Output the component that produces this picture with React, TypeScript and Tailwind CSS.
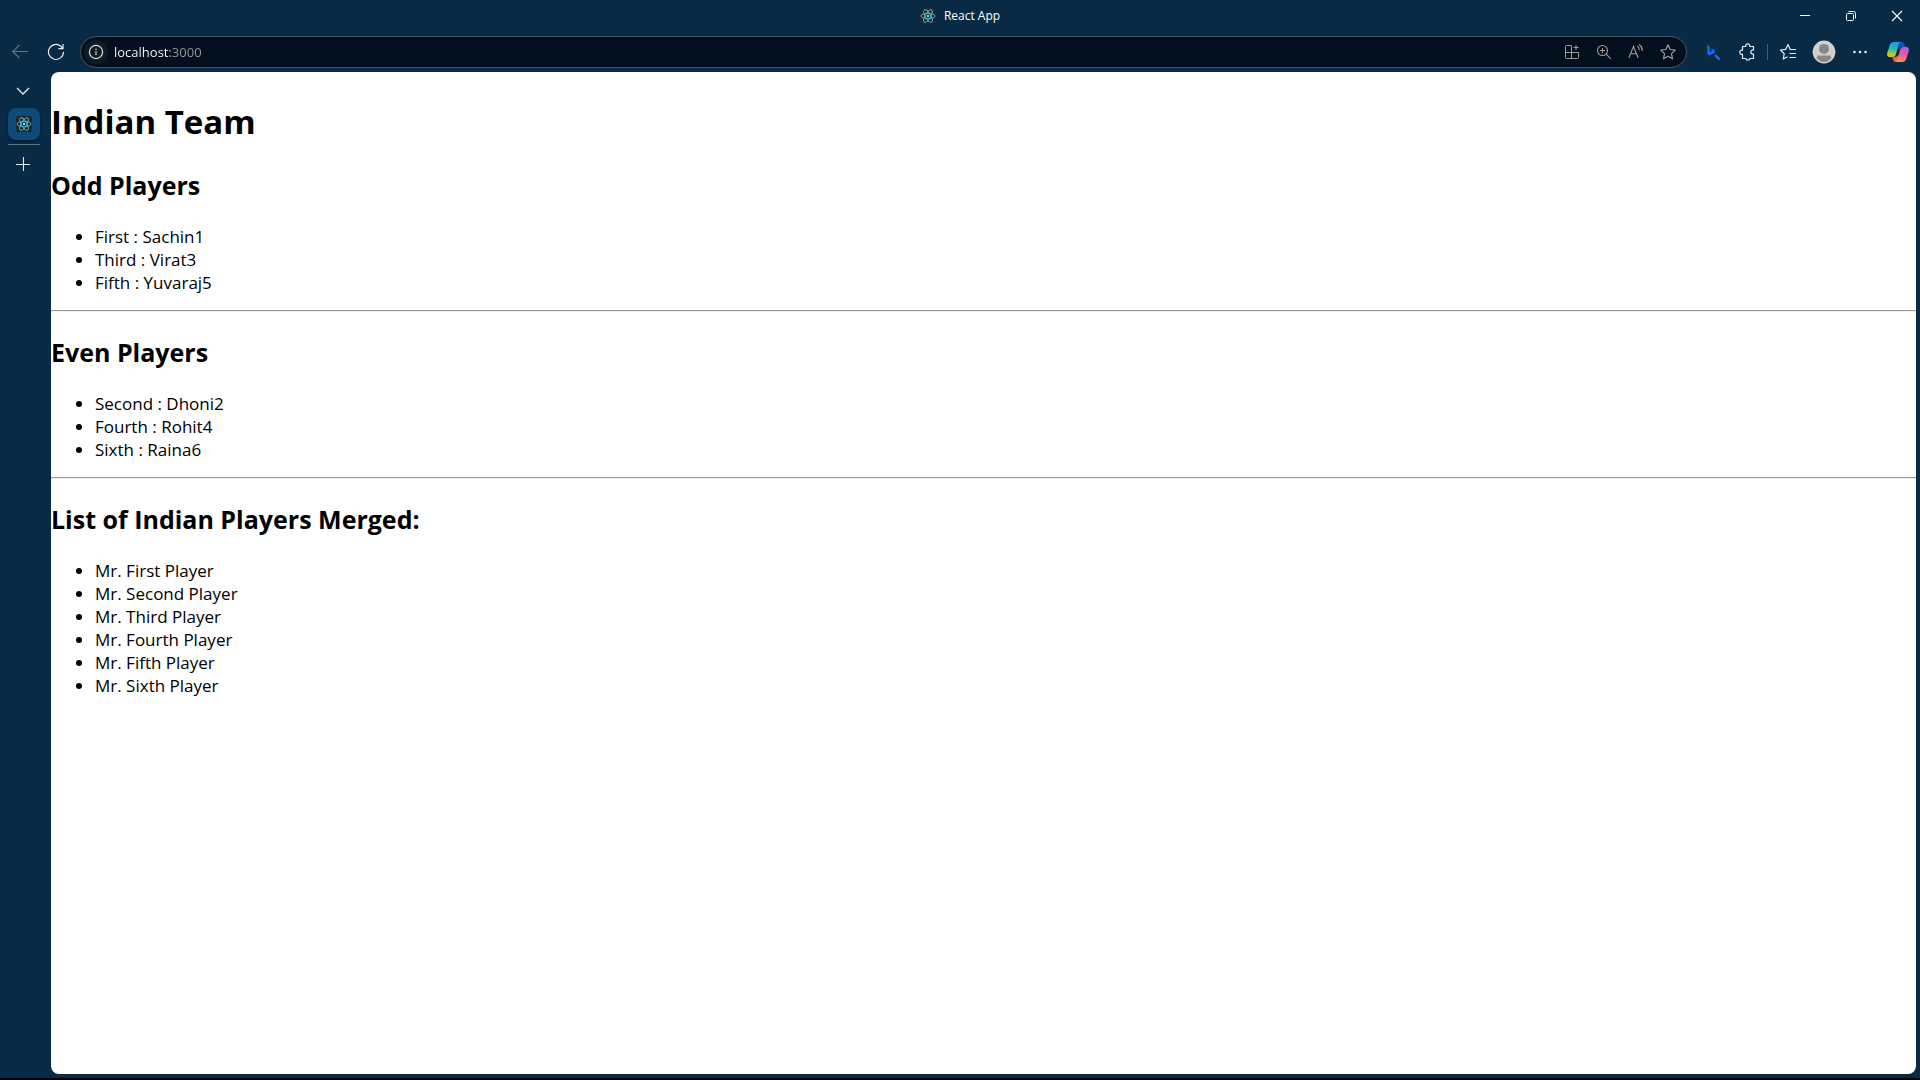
import React from 'react';

const iconBtn = 'flex shrink-0 items-center justify-center';

function Atom({ size = 16 }: { size?: number }) {
  return (
    <svg width={size} height={size} viewBox="0 0 16 16" fill="none" stroke="#58b8d0" strokeWidth="0.9" aria-hidden="true">
      <rect width="16" height="16" rx="2" fill="#22272b" stroke="none" />
      <ellipse cx="8" cy="8" rx="7" ry="2.7" />
      <ellipse cx="8" cy="8" rx="7" ry="2.7" transform="rotate(60 8 8)" />
      <ellipse cx="8" cy="8" rx="7" ry="2.7" transform="rotate(120 8 8)" />
      <circle cx="8" cy="8" r="1.3" fill="#61dafb" stroke="none" />
    </svg>
  );
}

function TitleBar() {
  return (
    <header className="grid h-9 grid-cols-[1fr_auto_1fr] items-start text-white">
      <span />
      <div className="flex h-8 items-center gap-2">
        <Atom />
        <span className="text-[12px] leading-4">React App</span>
      </div>
      <div className="flex h-8 justify-end">
        <button aria-label="Minimize" className={`${iconBtn} w-[46px]`}>
          <svg width="12" height="12" stroke="currentColor" fill="none"><path d="M1 5.5h10" /></svg>
        </button>
        <button aria-label="Restore" className={`${iconBtn} w-[46px]`}>
          <svg width="12" height="12" stroke="currentColor" fill="none">
            <rect x="1.5" y="3.5" width="7" height="7" rx="1" />
            <path d="M3.5 1.5h5a2 2 0 0 1 2 2v5" />
          </svg>
        </button>
        <button aria-label="Close" className={`${iconBtn} w-[46px]`}>
          <svg width="12" height="12" stroke="currentColor" strokeWidth="1.1" fill="none"><path d="M1 1l10 10M11 1L1 11" /></svg>
        </button>
      </div>
    </header>
  );
}

function AddressBar() {
  return (
    <div className="flex h-8 min-w-0 flex-1 items-center rounded-full border border-[#4b535b] bg-[#020f1c] pl-[3px] pr-[2px] text-[#a09c98]">
      <button aria-label="View site information" className={`${iconBtn} size-6 rounded-full bg-[#0f1c26] text-[#dcdcdc]`}>
        <svg width="16" height="16" viewBox="0 0 16 16" fill="none" stroke="currentColor">
          <circle cx="8" cy="8" r="6.6" strokeWidth="1.2" />
          <path d="M8 7.3v3.6" strokeWidth="1.2" />
          <circle cx="8" cy="5.3" r="0.8" fill="currentColor" stroke="none" />
        </svg>
      </button>
      <input
        aria-label="Address"
        defaultValue="localhost:3000"
        className="ml-[6px] h-6 min-w-0 flex-1 bg-linear-to-r from-white from-[56px] to-[#9a9a9a] to-[56px] bg-clip-text text-[13px] leading-6 text-transparent outline-none"
      />
      <button aria-label="Install app" className={`${iconBtn} h-6 w-8`}>
        <svg width="16" height="16" viewBox="0 0 16 16" fill="none" stroke="currentColor">
          <path d="M7.5 1.5h-5a1 1 0 0 0-1 1v11a1 1 0 0 0 1 1h11a1 1 0 0 0 1-1v-5h-13M7.5 1.5v13" />
          <path d="M12 1v5M9.5 3.5h5" />
        </svg>
      </button>
      <button aria-label="Zoom" className={`${iconBtn} h-6 w-8`}>
        <svg width="16" height="16" viewBox="0 0 16 16" fill="none" stroke="currentColor" strokeWidth="1.1">
          <circle cx="6.5" cy="6.5" r="5" />
          <path d="M10.2 10.2l4.6 4.6M6.5 4v5M4 6.5h5" />
        </svg>
      </button>
      <button aria-label="Read aloud" className={`${iconBtn} h-6 w-8`}>
        <svg width="16" height="16" viewBox="0 0 16 16" fill="none" stroke="currentColor" strokeWidth="1.1" strokeLinecap="round">
          <path d="M1 13.5L5.5 2.5L10 13.5M2.6 9.8h5.8" />
          <path d="M9.5 2.3a4 4 0 0 1 1.6 3.6M11.3 0.8a6.5 6.5 0 0 1 3 5.6" />
        </svg>
      </button>
      <button aria-label="Add to favorites" className={`${iconBtn} h-6 w-8`}>
        <svg width="18" height="18" viewBox="0 0 18 18" fill="none" stroke="currentColor" strokeWidth="1.2" strokeLinejoin="round">
          <path d="M9 1.8l2.2 4.7 5.1.6-3.8 3.5 1 5.2L9 13.3l-4.5 2.5 1-5.2-3.8-3.5 5.1-.6z" />
        </svg>
      </button>
    </div>
  );
}

function Toolbar() {
  return (
    <nav className="flex h-8 items-center text-[#e6eaed]">
      <button aria-label="Back" className={`${iconBtn} h-8 w-10 text-[#5f7788]`}>
        <svg width="18" height="16" viewBox="0 0 18 16" fill="none" stroke="currentColor" strokeWidth="1.1">
          <path d="M17 7.5H1.5M8.5 1L1.5 7.5L8.5 14" />
        </svg>
      </button>
      <button aria-label="Refresh" className={`${iconBtn} mr-2 h-8 w-8`}>
        <svg width="18" height="18" viewBox="0 0 18 18" fill="none" stroke="currentColor" strokeWidth="1.2">
          <path d="M16.5 9a7.5 7.5 0 1 1-2.6-5.7L16 5.6M16 1v4.6h-4.6" />
        </svg>
      </button>
      <AddressBar />
      <button aria-label="Search with Bing" className={`${iconBtn} ml-[7px] h-8 w-[35px]`}>
        <svg width="18" height="18" viewBox="0 0 18 18" fill="none">
          <circle cx="8" cy="8" r="6.8" stroke="#252c33" strokeWidth="1.2" />
          <path d="M4.200 2.200L6.800 3.200V9.300L9 8L7.600 5.200L11.800 7V9.700L6.800 12.600L4.200 11.200Z" fill="#0b6cff" />
          <path d="M12 12l4.500 4.500" stroke="#0b7cff" strokeWidth="2.200" />
        </svg>
      </button>
      <button aria-label="Extensions" className={`${iconBtn} h-8 w-[37px]`}>
        <svg width="18" height="18" viewBox="0 0 18 18" fill="none" stroke="currentColor" strokeWidth="1.2" strokeLinejoin="round">
          <path d="M3.5 3.5h3.2a2.1 2.1 0 1 1 4.1 0h3.7v3.6h-.7a2 2 0 1 0 0 4h.7v4.4h-3.7a2.1 2.1 0 0 1-4.1 0H3.5v-4.3a2.1 2.1 0 1 1 0-4z" />
        </svg>
      </button>
      <span className="mx-px h-4 w-px bg-[#3f5c70]" />
      <button aria-label="Favorites" className={`${iconBtn} ml-px h-8 w-9`}>
        <svg width="18" height="18" viewBox="0 0 18 18" fill="none" stroke="currentColor" strokeWidth="1.2" strokeLinejoin="round">
          <path d="M17 6.5h-5.8L9 1.5L6.6 6.3L1.4 7l3.8 3.7-.9 5.3 4.2-2.2M10.5 10.5H17M10.5 14.5H17" />
        </svg>
      </button>
      <button aria-label="Profile" className={`${iconBtn} h-8 w-9`}>
        <svg width="24" height="24" viewBox="0 0 24 24">
          <circle cx="12" cy="12" r="11.4" fill="#d2d0ce" />
          <circle cx="12" cy="8.9" r="5" fill="#8a8886" />
          <path d="M4.8 18.2a2 2 0 0 1 2-2.6h10.4a2 2 0 0 1 2 2.6C17.500 20.5 15 22 12 22s-5.500-1.500-7.200-3.800z" fill="#8a8886" />
        </svg>
      </button>
      <button aria-label="Settings and more" className={`${iconBtn} h-8 w-9`}>
        <svg width="16" height="16" viewBox="0 0 16 16" fill="currentColor">
          <circle cx="2.500" cy="8" r="1.300" /><circle cx="8" cy="8" r="1.300" /><circle cx="13.500" cy="8" r="1.300" />
        </svg>
      </button>
      <button aria-label="Copilot" className={`${iconBtn} mr-[2px] h-8 w-10`}>
        <svg width="24" height="24" viewBox="0 0 24 24" fill="none">
          <defs>
            <linearGradient id="cpA" x1="8" y1="2" x2="5" y2="17" gradientUnits="userSpaceOnUse">
              <stop stopColor="#1b9cf0" /><stop offset="0.450" stopColor="#22b8b0" /><stop offset="0.750" stopColor="#9cc83c" /><stop offset="1" stopColor="#f0c419" />
            </linearGradient>
            <linearGradient id="cpB" x1="19" y1="7" x2="14" y2="22" gradientUnits="userSpaceOnUse">
              <stop stopColor="#a45cf0" /><stop offset="0.450" stopColor="#e8559a" /><stop offset="1" stopColor="#ff9a50" />
            </linearGradient>
          </defs>
          <path d="M13 2h2.500c1.600 0 2.300.8 2.800 2.300L19.300 7h-3.800c-1.500 0-2.300.8-2.700 2.200z" fill="#1450c8" />
          <path d="M6.500 17h2.700c1.400 0 2-.8 2.400-2l1.200 5.500c.3 1 .8 1.500 1.700 1.500H9.800c-1.700 0-2.400-1-2.800-2.500z" fill="#f0603c" />
          <path d="M7.800 2h7.400c-1.300 0-2 .8-2.400 2.200L10 14c-.6 2-1.400 3-3.400 3H3.800C1.500 17 .6 15.300 1.200 13L3.800 5C4.500 3 5.800 2 7.800 2z" fill="url(#cpA)" />
          <path d="M16.200 22H8.800c1.300 0 2-.8 2.400-2.200L14 10c.6-2 1.400-3 3.400-3h2.800c2.300 0 3.200 1.700 2.600 4l-2.600 8c-.7 2-2 3-4 3z" fill="url(#cpB)" />
        </svg>
      </button>
    </nav>
  );
}

function TabRail() {
  return (
    <aside className="flex w-[51px] shrink-0 flex-col pl-2 text-[#e6eaed]">
      <button aria-label="Tab actions" className={`${iconBtn} h-9 w-[30px]`}>
        <svg width="14" height="14" viewBox="0 0 14 14" fill="none" stroke="currentColor" strokeWidth="1.300"><path d="M1 5l6 6 6-6" /></svg>
      </button>
      <button aria-label="React App" className={`${iconBtn} size-8 rounded-lg bg-[#0d4b7a] shadow-[0_1px_3px_rgba(0,0,0,0.6)]`}>
        <Atom />
      </button>
      <span className="mt-1 h-px w-8 bg-[#5d7485]" />
      <button aria-label="New tab" className={`${iconBtn} mt-[3px] h-8 w-[30px]`}>
        <svg width="14" height="14" viewBox="0 0 14 14" fill="none" stroke="currentColor" strokeWidth="1.100"><path d="M7.500 0v14M0 7.500h14" /></svg>
      </button>
    </aside>
  );
}

function Section({ title, items }: { title: string; items: string[] }) {
  return (
    <section>
      <h2 className="pt-[23px] text-[25px] font-bold leading-[35px]">{title}</h2>
      <ul className="mt-[22px] list-disc pl-11 text-[17px] leading-[23px]">
        {items.map((t) => <li key={t}>{t}</li>)}
      </ul>
    </section>
  );
}

const rule = 'mt-4 h-[2px] border-0 border-t border-b border-t-[#9a9a9a] border-b-[#eeeeee]';

export default function App() {
  return (
    <div className="flex min-h-screen flex-col border-b-2 border-black bg-[#082a44] font-['Open_Sans','Noto_Sans',sans-serif]">
      <TitleBar />
      <Toolbar />
      <div className="flex flex-1 pb-1 pr-1 pt-1">
        <TabRail />
        <main className="min-w-0 flex-1 rounded-lg bg-white text-black">
          <h1 className="pt-[26px] text-[33px] font-bold leading-[47px]">Indian Team</h1>
          <Section title="Odd Players" items={['First : Sachin1', 'Third : Virat3', 'Fifth : Yuvaraj5']} />
          <hr className={rule} />
          <Section title="Even Players" items={['Second : Dhoni2', 'Fourth : Rohit4', 'Sixth : Raina6']} />
          <hr className={rule} />
          <Section
            title="List of Indian Players Merged:"
            items={['Mr. First Player', 'Mr. Second Player', 'Mr. Third Player', 'Mr. Fourth Player', 'Mr. Fifth Player', 'Mr. Sixth Player']}
          />
        </main>
      </div>
    </div>
  );
}
